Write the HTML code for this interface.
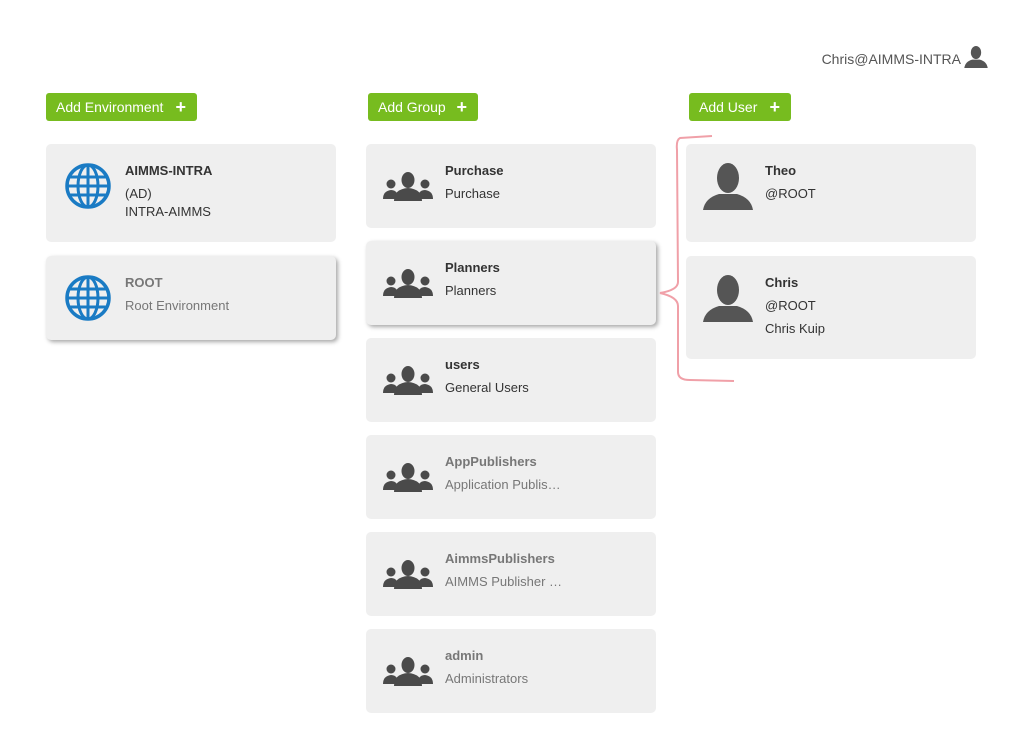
<!DOCTYPE html>
<html><head><meta charset="utf-8"><style>
body{margin:0;width:1029px;height:753px;background:#fff;font-family:"Liberation Sans",sans-serif;position:relative;overflow:hidden;color:#333}
.a{position:absolute}
.btn{position:absolute;top:93px;height:28px;background:#77bc1f;border-radius:3px;color:#fff;font-size:14px;line-height:28px;padding-left:10px;box-sizing:border-box}
.btn b{position:absolute;right:11px;top:0;font-size:18px;font-weight:bold}
.card{position:absolute;width:290px;background:#efefef;border-radius:5px}
.sh{box-shadow:2px 2px 4px rgba(0,0,0,.35)}
.t{position:absolute;left:79px;font-size:13px;line-height:16px;white-space:nowrap}
.t b{display:block}
.g{color:#777}
svg.i{position:absolute}
</style></head><body>
<div class="a" style="right:68px;top:51px;font-size:14px;color:#555">Chris@AIMMS-INTRA</div>
<svg class="a" style="left:964px;top:46px" width="24" height="22" viewBox="0 0 50 47"><ellipse cx="25" cy="14" rx="11" ry="14" fill="#555"/><path d="M0 47Q2 33 17 29L33 29Q48 33 50 47Z" fill="#555"/></svg>

<div class="btn" style="left:46px;width:151px">Add Environment<b>+</b></div>
<div class="btn" style="left:368px;width:110px">Add Group<b>+</b></div>
<div class="btn" style="left:689px;width:102px">Add User<b>+</b></div>

<svg width="0" height="0" style="position:absolute">
<defs>
<g id="globe"><circle cx="23" cy="23" r="21" fill="none" stroke="#1a7bc4" stroke-width="3.5"/><ellipse cx="23" cy="23" rx="10" ry="21" fill="none" stroke="#1a7bc4" stroke-width="3"/><line x1="23" y1="2" x2="23" y2="44" stroke="#1a7bc4" stroke-width="3"/><line x1="2" y1="23" x2="44" y2="23" stroke="#1a7bc4" stroke-width="3"/><line x1="5" y1="14" x2="41" y2="14" stroke="#1a7bc4" stroke-width="3"/><line x1="5" y1="32" x2="41" y2="32" stroke="#1a7bc4" stroke-width="3"/></g>
<g id="grp" fill="#4a4a4a"><ellipse cx="25" cy="8" rx="6.5" ry="8"/><path d="M11 29Q11 17 25 16Q39 17 39 29Z"/><circle cx="8" cy="12" r="4.5"/><path d="M0 27Q0 19 8 18Q12 18 14 21L12 27Z"/><circle cx="42" cy="12" r="4.5"/><path d="M50 27Q50 19 42 18Q38 18 36 21L38 27Z"/></g>
<g id="usr" fill="#555"><ellipse cx="25" cy="15" rx="11" ry="15"/><path d="M0 47Q2 35 16 31L34 31Q48 35 50 47Z"/></g>
</defs></svg>

<div class="card" style="left:46px;top:144px;height:98px"><svg class="i" style="left:19px;top:19px" width="46" height="46"><use href="#globe"/></svg><div class="t" style="top:19px"><b>AIMMS-INTRA</b><div style="margin-top:7px">(AD)</div><div style="margin-top:2px">INTRA-AIMMS</div></div></div>
<div class="card sh" style="left:46px;top:256px;height:84px"><svg class="i" style="left:19px;top:19px" width="46" height="46"><use href="#globe"/></svg><div class="t g" style="top:19px"><b>ROOT</b><div style="margin-top:7px">Root Environment</div></div></div>

<div class="card" style="left:366px;top:144px;height:84px"><svg class="i" style="left:17px;top:28px" width="50" height="30"><use href="#grp"/></svg><div class="t" style="top:19px"><b>Purchase</b><div style="margin-top:7px">Purchase</div></div></div>
<div class="card sh" style="left:366px;top:241px;height:84px"><svg class="i" style="left:17px;top:28px" width="50" height="30"><use href="#grp"/></svg><div class="t" style="top:19px"><b>Planners</b><div style="margin-top:7px">Planners</div></div></div>
<div class="card" style="left:366px;top:338px;height:84px"><svg class="i" style="left:17px;top:28px" width="50" height="30"><use href="#grp"/></svg><div class="t" style="top:19px"><b>users</b><div style="margin-top:7px">General Users</div></div></div>
<div class="card" style="left:366px;top:435px;height:84px"><svg class="i" style="left:17px;top:28px" width="50" height="30"><use href="#grp"/></svg><div class="t g" style="top:19px"><b>AppPublishers</b><div style="margin-top:7px">Application Publis…</div></div></div>
<div class="card" style="left:366px;top:532px;height:84px"><svg class="i" style="left:17px;top:28px" width="50" height="30"><use href="#grp"/></svg><div class="t g" style="top:19px"><b>AimmsPublishers</b><div style="margin-top:7px">AIMMS Publisher …</div></div></div>
<div class="card" style="left:366px;top:629px;height:84px"><svg class="i" style="left:17px;top:28px" width="50" height="30"><use href="#grp"/></svg><div class="t g" style="top:19px"><b>admin</b><div style="margin-top:7px">Administrators</div></div></div>

<div class="card" style="left:686px;top:144px;height:98px"><svg class="i" style="left:17px;top:19px" width="50" height="47"><use href="#usr"/></svg><div class="t" style="top:19px"><b>Theo</b><div style="margin-top:7px">@ROOT</div></div></div>
<div class="card" style="left:686px;top:256px;height:103px"><svg class="i" style="left:17px;top:19px" width="50" height="47"><use href="#usr"/></svg><div class="t" style="top:19px"><b>Chris</b><div style="margin-top:7px">@ROOT</div><div style="margin-top:7px">Chris Kuip</div></div></div>

<svg class="a" style="left:0;top:0" width="1029" height="753"><path d="M712 136L680 138Q676 140 677 150L678 282Q678 290 660 293Q678 297 678 306L678 372Q678 380 690 380L734 381" fill="none" stroke="#f0a0a8" stroke-width="2"/></svg>
</body></html>
